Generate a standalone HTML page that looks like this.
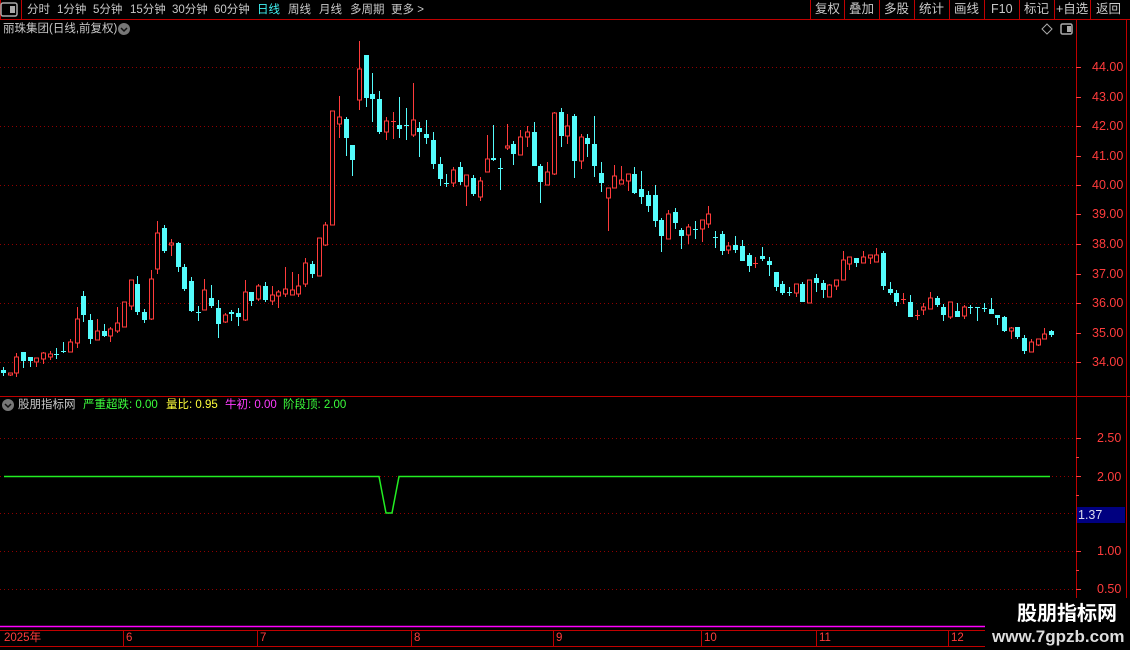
<!DOCTYPE html>
<html><head><meta charset="utf-8"><style>
*{margin:0;padding:0}
body{width:1130px;height:650px;background:#000;overflow:hidden;position:relative;font-family:"Liberation Sans","Noto Sans CJK SC",sans-serif;}
.t{position:absolute;white-space:nowrap;font-size:11.5px;line-height:14px}
.m{color:#c8c8c8}
.ax{position:absolute;color:#ff3c3c;font-size:12.5px;left:1092px;line-height:14px;font-family:"Liberation Sans",sans-serif}
.btn{position:absolute;top:2px;color:#c8c8c8;font-size:12.5px;line-height:14px}
</style></head><body>
<svg width="1130" height="650" style="position:absolute;left:0;top:0">
<g stroke="#c00000" stroke-width="1" fill="none">
<path d="M0 19.5H1130"/>
<path d="M21.5 0V19"/><path d="M0.5 0V19"/>
<path d="M810.5 0V19M844.5 0V19M879.5 0V19M914.5 0V19M949.5 0V19M984.5 0V19M1019.5 0V19M1054.5 0V19M1090.5 0V19"/>
<path d="M1076.5 20V626M1126.5 20V626"/>
<path d="M0 396.5H1130"/>
<path d="M0 630.5H985M0 646.5H985"/>
<path d="M123.5 630V646M257.5 630V646M411.5 630V646M553.5 630V646M701.5 630V646M816.5 630V646M948.5 630V646"/>
</g>
<g stroke="#ff3c3c"><path d="M1076 67.5h5M1076 97.5h5M1076 126.5h5M1076 156.5h5M1076 185.5h5M1076 214.5h5M1076 244.5h5M1076 274.5h5M1076 303.5h5M1076 333.5h5M1076 362.5h5M1076 438.5h5M1076 476.5h5M1076 551.5h5M1076 589.5h5M1076 457.5h3M1076 495.5h3M1076 570.5h3"/></g>
<g stroke="#900000" stroke-dasharray="1 3">
<path d="M0 67.5H1076M0 126.5H1076M0 185.5H1076M0 244.5H1076M0 303.5H1076M0 362.5H1076"/>
<path d="M0 438.5H1076M0 476.5H1076M0 513.5H1076M0 551.5H1076M0 589.5H1076"/>
</g>
<rect x="1" y="3" width="16" height="13" rx="2" fill="none" stroke="#aaa" stroke-width="1.5"/><rect x="10" y="6" width="5" height="7" fill="#aaa"/>
<circle cx="124" cy="29" r="6" fill="#777"/><path d="M121 28l3 3 3-3" stroke="#111" stroke-width="1.5" fill="none"/>
<path d="M1047 24l5 5-5 5-5-5z" fill="none" stroke="#aaa"/>
<rect x="1061" y="24" width="11" height="10" rx="1.5" fill="none" stroke="#aaa" stroke-width="1.5"/><rect x="1067" y="26" width="4" height="6" fill="#aaa"/>
<circle cx="8" cy="405" r="6" fill="#777"/><path d="M5 404l3 3 3-3" stroke="#111" stroke-width="1.5" fill="none"/>
<g stroke="#ff3b3b" stroke-width="1" fill="none">
<path d="M10.5 373V376 M16.5 353V377 M36.5 358V367 M43.5 352V364 M50.5 351V360 M70.5 339V352 M77.5 307V348 M97.5 319V340 M110.5 327V342 M117.5 307V333 M124.5 302V327 M131.5 280V310 M151.5 270V320 M157.5 221V274 M171.5 239V256 M204.5 279V310 M225.5 313V323 M245.5 280V321 M258.5 284V301 M272.5 286V305 M278.5 290V308 M285.5 267V297 M292.5 272V295 M298.5 274V297 M305.5 258V287 M319.5 238V276 M325.5 222V246 M332.5 111V225 M339.5 96V138 M359.5 41V110 M386.5 117V140 M393.5 112V139 M391 121.5H396 M413.5 83V137 M453.5 167V187 M466.5 175V206 M480.5 177V201 M487.5 135V172 M507.5 124V150 M520.5 130V155 M527.5 126V147 M547.5 162V185 M554.5 112V175 M567.5 114V144 M581.5 134V169 M608.5 188V231 M614.5 165V188 M621.5 166V184 M628.5 174V191 M668.5 210V239 M688.5 224V244 M702.5 220V242 M708.5 206V228 M728.5 242V254 M755.5 257V268 M753 263.5H758 M796.5 284V297 M809.5 280V303 M829.5 284V297 M836.5 280V290 M843.5 251V280 M849.5 257V270 M863.5 251V263 M870.5 255V264 M876.5 248V262 M903.5 293V304 M901 299.5H906 M917.5 310V320 M915 315.5H920 M923.5 303V315 M930.5 292V309 M950.5 302V319 M964.5 305V319 M1011.5 327V339 M1031.5 339V352 M1038.5 339V346 M1044.5 328V339"/>
<g fill="#000">
<rect x="8.5" y="373" width="4" height="2"/><rect x="14.5" y="357" width="4" height="16"/><rect x="34.5" y="358" width="4" height="4"/><rect x="41.5" y="353" width="4" height="6"/><rect x="48.5" y="354" width="4" height="3"/><rect x="68.5" y="342" width="4" height="10"/><rect x="75.5" y="319" width="4" height="24"/><rect x="95.5" y="331" width="4" height="9"/><rect x="108.5" y="329" width="4" height="7"/><rect x="115.5" y="323" width="4" height="8"/><rect x="122.5" y="302" width="4" height="25"/><rect x="129.5" y="280" width="4" height="26"/><rect x="149.5" y="279" width="4" height="40"/><rect x="155.5" y="233" width="4" height="36"/><rect x="169.5" y="243" width="4" height="2"/><rect x="202.5" y="290" width="4" height="20"/><rect x="223.5" y="315" width="4" height="7"/><rect x="243.5" y="292" width="4" height="28"/><rect x="256.5" y="286" width="4" height="13"/><rect x="270.5" y="295" width="4" height="6"/><rect x="276.5" y="292" width="4" height="4"/><rect x="283.5" y="289" width="4" height="5"/><rect x="290.5" y="290" width="4" height="5"/><rect x="296.5" y="286" width="4" height="8"/><rect x="303.5" y="263" width="4" height="21"/><rect x="317.5" y="238" width="4" height="38"/><rect x="323.5" y="225" width="4" height="20"/><rect x="330.5" y="111" width="4" height="114"/><rect x="337.5" y="117" width="4" height="7"/><rect x="357.5" y="69" width="4" height="31"/><rect x="384.5" y="121" width="4" height="11"/><rect x="411.5" y="120" width="4" height="15"/><rect x="451.5" y="170" width="4" height="13"/><rect x="464.5" y="175" width="4" height="11"/><rect x="478.5" y="181" width="4" height="16"/><rect x="485.5" y="159" width="4" height="13"/><rect x="505.5" y="146" width="4" height="2"/><rect x="518.5" y="137" width="4" height="18"/><rect x="525.5" y="132" width="4" height="5"/><rect x="545.5" y="172" width="4" height="13"/><rect x="552.5" y="113" width="4" height="61"/><rect x="565.5" y="126" width="4" height="10"/><rect x="579.5" y="137" width="4" height="24"/><rect x="606.5" y="188" width="4" height="10"/><rect x="612.5" y="176" width="4" height="12"/><rect x="619.5" y="180" width="4" height="4"/><rect x="626.5" y="174" width="4" height="7"/><rect x="666.5" y="214" width="4" height="25"/><rect x="686.5" y="227" width="4" height="8"/><rect x="700.5" y="220" width="4" height="9"/><rect x="706.5" y="214" width="4" height="10"/><rect x="726.5" y="246" width="4" height="4"/><rect x="794.5" y="284" width="4" height="9"/><rect x="807.5" y="280" width="4" height="23"/><rect x="827.5" y="285" width="4" height="12"/><rect x="834.5" y="280" width="4" height="6"/><rect x="841.5" y="260" width="4" height="20"/><rect x="847.5" y="257" width="4" height="7"/><rect x="861.5" y="257" width="4" height="6"/><rect x="868.5" y="255" width="4" height="3"/><rect x="874.5" y="255" width="4" height="7"/><rect x="921.5" y="307" width="4" height="3"/><rect x="928.5" y="298" width="4" height="11"/><rect x="948.5" y="302" width="4" height="15"/><rect x="962.5" y="307" width="4" height="9"/><rect x="1009.5" y="328" width="4" height="3"/><rect x="1029.5" y="342" width="4" height="10"/><rect x="1036.5" y="339" width="4" height="6"/><rect x="1042.5" y="334" width="4" height="5"/>
</g></g>
<g stroke="#54fcfc" fill="#54fcfc" stroke-width="1">
<path fill="none" d="M3.5 367V376 M23.5 352V368 M30.5 357V367 M56.5 348V359 M54 354.5H59 M63.5 342V353 M61 351.5H66 M83.5 291V322 M90.5 314V344 M104.5 324V337 M137.5 276V315 M144.5 309V323 M164.5 225V253 M178.5 242V272 M184.5 264V291 M191.5 277V312 M198.5 306V321 M196 312.5H201 M211.5 285V308 M218.5 300V338 M231.5 310V321 M238.5 308V326 M251.5 292V306 M265.5 282V302 M312.5 261V278 M346.5 117V156 M352.5 145V176 M366.5 55V107 M372.5 73V122 M379.5 91V134 M399.5 97V138 M406.5 108V140 M404 125.5H409 M419.5 122V157 M426.5 120V144 M433.5 132V169 M440.5 157V186 M446.5 174V187 M444 183.5H449 M460.5 162V185 M473.5 175V196 M493.5 125V161 M500.5 158V190 M498 168.5H503 M513.5 141V165 M534.5 122V166 M540.5 164V203 M561.5 108V147 M574.5 114V178 M587.5 134V157 M594.5 116V177 M601.5 162V192 M634.5 167V194 M641.5 171V204 M648.5 191V212 M655.5 185V227 M661.5 218V252 M675.5 208V229 M681.5 228V249 M695.5 221V239 M693 229.5H698 M715.5 231V248 M713 237.5H718 M722.5 231V255 M735.5 236V253 M742.5 240V261 M749.5 253V272 M762.5 247V261 M769.5 257V276 M776.5 272V291 M782.5 281V295 M789.5 287V296 M787 292.5H792 M802.5 282V302 M816.5 274V292 M823.5 280V298 M856.5 258V267 M883.5 251V290 M890.5 282V295 M896.5 290V306 M910.5 295V317 M937.5 296V307 M943.5 304V321 M957.5 303V317 M970.5 305V314 M968 307.5H973 M977.5 307V321 M975 307.5H980 M984.5 303V312 M982 308.5H987 M991.5 298V314 M997.5 315V325 M1004.5 316V332 M1017.5 327V339 M1024.5 335V354 M1051.5 330V337"/>
<g stroke="none">
<rect x="1" y="370" width="5" height="3"/><rect x="21" y="352" width="5" height="9"/><rect x="28" y="357" width="5" height="4"/><rect x="81" y="296" width="5" height="19"/><rect x="88" y="320" width="5" height="19"/><rect x="102" y="331" width="5" height="5"/><rect x="135" y="284" width="5" height="28"/><rect x="142" y="312" width="5" height="8"/><rect x="162" y="228" width="5" height="23"/><rect x="176" y="243" width="5" height="24"/><rect x="182" y="267" width="5" height="22"/><rect x="189" y="281" width="5" height="30"/><rect x="209" y="298" width="5" height="8"/><rect x="216" y="308" width="5" height="16"/><rect x="229" y="312" width="5" height="2"/><rect x="236" y="313" width="5" height="4"/><rect x="249" y="292" width="5" height="9"/><rect x="263" y="286" width="5" height="14"/><rect x="310" y="264" width="5" height="10"/><rect x="344" y="119" width="5" height="19"/><rect x="350" y="145" width="5" height="15"/><rect x="364" y="55" width="5" height="43"/><rect x="370" y="94" width="5" height="5"/><rect x="377" y="99" width="5" height="33"/><rect x="397" y="125" width="5" height="4"/><rect x="417" y="128" width="5" height="4"/><rect x="424" y="134" width="5" height="4"/><rect x="431" y="140" width="5" height="24"/><rect x="438" y="164" width="5" height="15"/><rect x="458" y="167" width="5" height="15"/><rect x="471" y="178" width="5" height="16"/><rect x="491" y="158" width="5" height="2"/><rect x="511" y="144" width="5" height="10"/><rect x="532" y="132" width="5" height="34"/><rect x="538" y="166" width="5" height="16"/><rect x="559" y="112" width="5" height="24"/><rect x="572" y="116" width="5" height="45"/><rect x="585" y="138" width="5" height="6"/><rect x="592" y="144" width="5" height="22"/><rect x="599" y="173" width="5" height="10"/><rect x="632" y="174" width="5" height="19"/><rect x="639" y="189" width="5" height="8"/><rect x="646" y="195" width="5" height="11"/><rect x="653" y="195" width="5" height="26"/><rect x="659" y="220" width="5" height="16"/><rect x="673" y="212" width="5" height="11"/><rect x="679" y="230" width="5" height="6"/><rect x="720" y="234" width="5" height="17"/><rect x="733" y="245" width="5" height="5"/><rect x="740" y="246" width="5" height="15"/><rect x="747" y="255" width="5" height="11"/><rect x="760" y="256" width="5" height="3"/><rect x="767" y="261" width="5" height="4"/><rect x="774" y="272" width="5" height="15"/><rect x="780" y="284" width="5" height="9"/><rect x="800" y="284" width="5" height="18"/><rect x="814" y="278" width="5" height="5"/><rect x="821" y="283" width="5" height="7"/><rect x="854" y="258" width="5" height="5"/><rect x="881" y="253" width="5" height="33"/><rect x="888" y="289" width="5" height="4"/><rect x="894" y="293" width="5" height="9"/><rect x="908" y="302" width="5" height="15"/><rect x="935" y="298" width="5" height="7"/><rect x="941" y="307" width="5" height="8"/><rect x="955" y="311" width="5" height="6"/><rect x="989" y="309" width="5" height="5"/><rect x="995" y="315" width="5" height="3"/><rect x="1002" y="317" width="5" height="14"/><rect x="1015" y="327" width="5" height="10"/><rect x="1022" y="338" width="5" height="13"/><rect x="1049" y="331" width="5" height="4"/>
</g></g>
<path d="M4 476.5H379L386 513H392L399 476.5H1050" stroke="#22ee22" stroke-width="1.5" fill="none"/>
<path d="M0 626.5H985" stroke="#ff00ff" stroke-width="1.5"/>
<rect x="1077" y="507" width="48" height="16" fill="#000080"/>
<rect x="985" y="598" width="145" height="52" fill="#000"/>
</svg>
<div class="t m" style="left:27px;top:3px">分时</div>
<div class="t m" style="left:57px;top:3px">1分钟</div>
<div class="t m" style="left:93px;top:3px">5分钟</div>
<div class="t m" style="left:130px;top:3px">15分钟</div>
<div class="t m" style="left:172px;top:3px">30分钟</div>
<div class="t m" style="left:214px;top:3px">60分钟</div>
<div class="t" style="left:257px;top:3px;color:#40f0f0">日线</div>
<div class="t m" style="left:288px;top:3px">周线</div>
<div class="t m" style="left:319px;top:3px">月线</div>
<div class="t m" style="left:350px;top:3px">多周期</div>
<div class="t m" style="left:391px;top:3px">更多 &gt;</div>
<div class="btn" style="left:815px">复权</div>
<div class="btn" style="left:849px">叠加</div>
<div class="btn" style="left:884px">多股</div>
<div class="btn" style="left:919px">统计</div>
<div class="btn" style="left:954px">画线</div>
<div class="btn" style="left:991px">F10</div>
<div class="btn" style="left:1024px">标记</div>
<div class="btn" style="left:1056px">+自选</div>
<div class="btn" style="left:1096px">返回</div>
<div class="t m" style="left:3px;top:22px">丽珠集团(日线,前复权)</div>
<div class="ax" style="top:60px">44.00</div>
<div class="ax" style="top:90px">43.00</div>
<div class="ax" style="top:119px">42.00</div>
<div class="ax" style="top:149px">41.00</div>
<div class="ax" style="top:178px">40.00</div>
<div class="ax" style="top:207px">39.00</div>
<div class="ax" style="top:237px">38.00</div>
<div class="ax" style="top:267px">37.00</div>
<div class="ax" style="top:296px">36.00</div>
<div class="ax" style="top:326px">35.00</div>
<div class="ax" style="top:355px">34.00</div>
<div class="ax" style="top:431px;left:1097px">2.50</div>
<div class="ax" style="top:470px;left:1097px">2.00</div>
<div class="ax" style="top:508px;left:1078px;color:#dde">1.37</div>
<div class="ax" style="top:544px;left:1097px">1.00</div>
<div class="ax" style="top:582px;left:1097px">0.50</div>
<div class="t m" style="left:18px;top:398px">股朋指标网</div>
<div class="t" style="left:83px;top:398px;color:#3cff3c">严重超跌: 0.00</div>
<div class="t" style="left:166px;top:398px;color:#ffff3c">量比: 0.95</div>
<div class="t" style="left:225px;top:398px;color:#ff3cff">牛初: 0.00</div>
<div class="t" style="left:283px;top:398px;color:#3cff3c">阶段顶: 2.00</div>
<div class="t" style="left:4px;top:631px;color:#ff3c3c">2025年</div>
<div class="t" style="left:126px;top:631px;color:#ff3c3c">6</div>
<div class="t" style="left:260px;top:631px;color:#ff3c3c">7</div>
<div class="t" style="left:414px;top:631px;color:#ff3c3c">8</div>
<div class="t" style="left:556px;top:631px;color:#ff3c3c">9</div>
<div class="t" style="left:704px;top:631px;color:#ff3c3c">10</div>
<div class="t" style="left:819px;top:631px;color:#ff3c3c">11</div>
<div class="t" style="left:951px;top:631px;color:#ff3c3c">12</div>
<div class="t" style="left:1017px;top:603px;color:#fff;font-size:20px;line-height:22px;font-weight:bold">股朋指标网</div>
<div class="t" style="left:992px;top:627px;color:#ddd;font-size:17px;line-height:19px;font-weight:bold">www.7gpzb.com</div>
</body></html>
